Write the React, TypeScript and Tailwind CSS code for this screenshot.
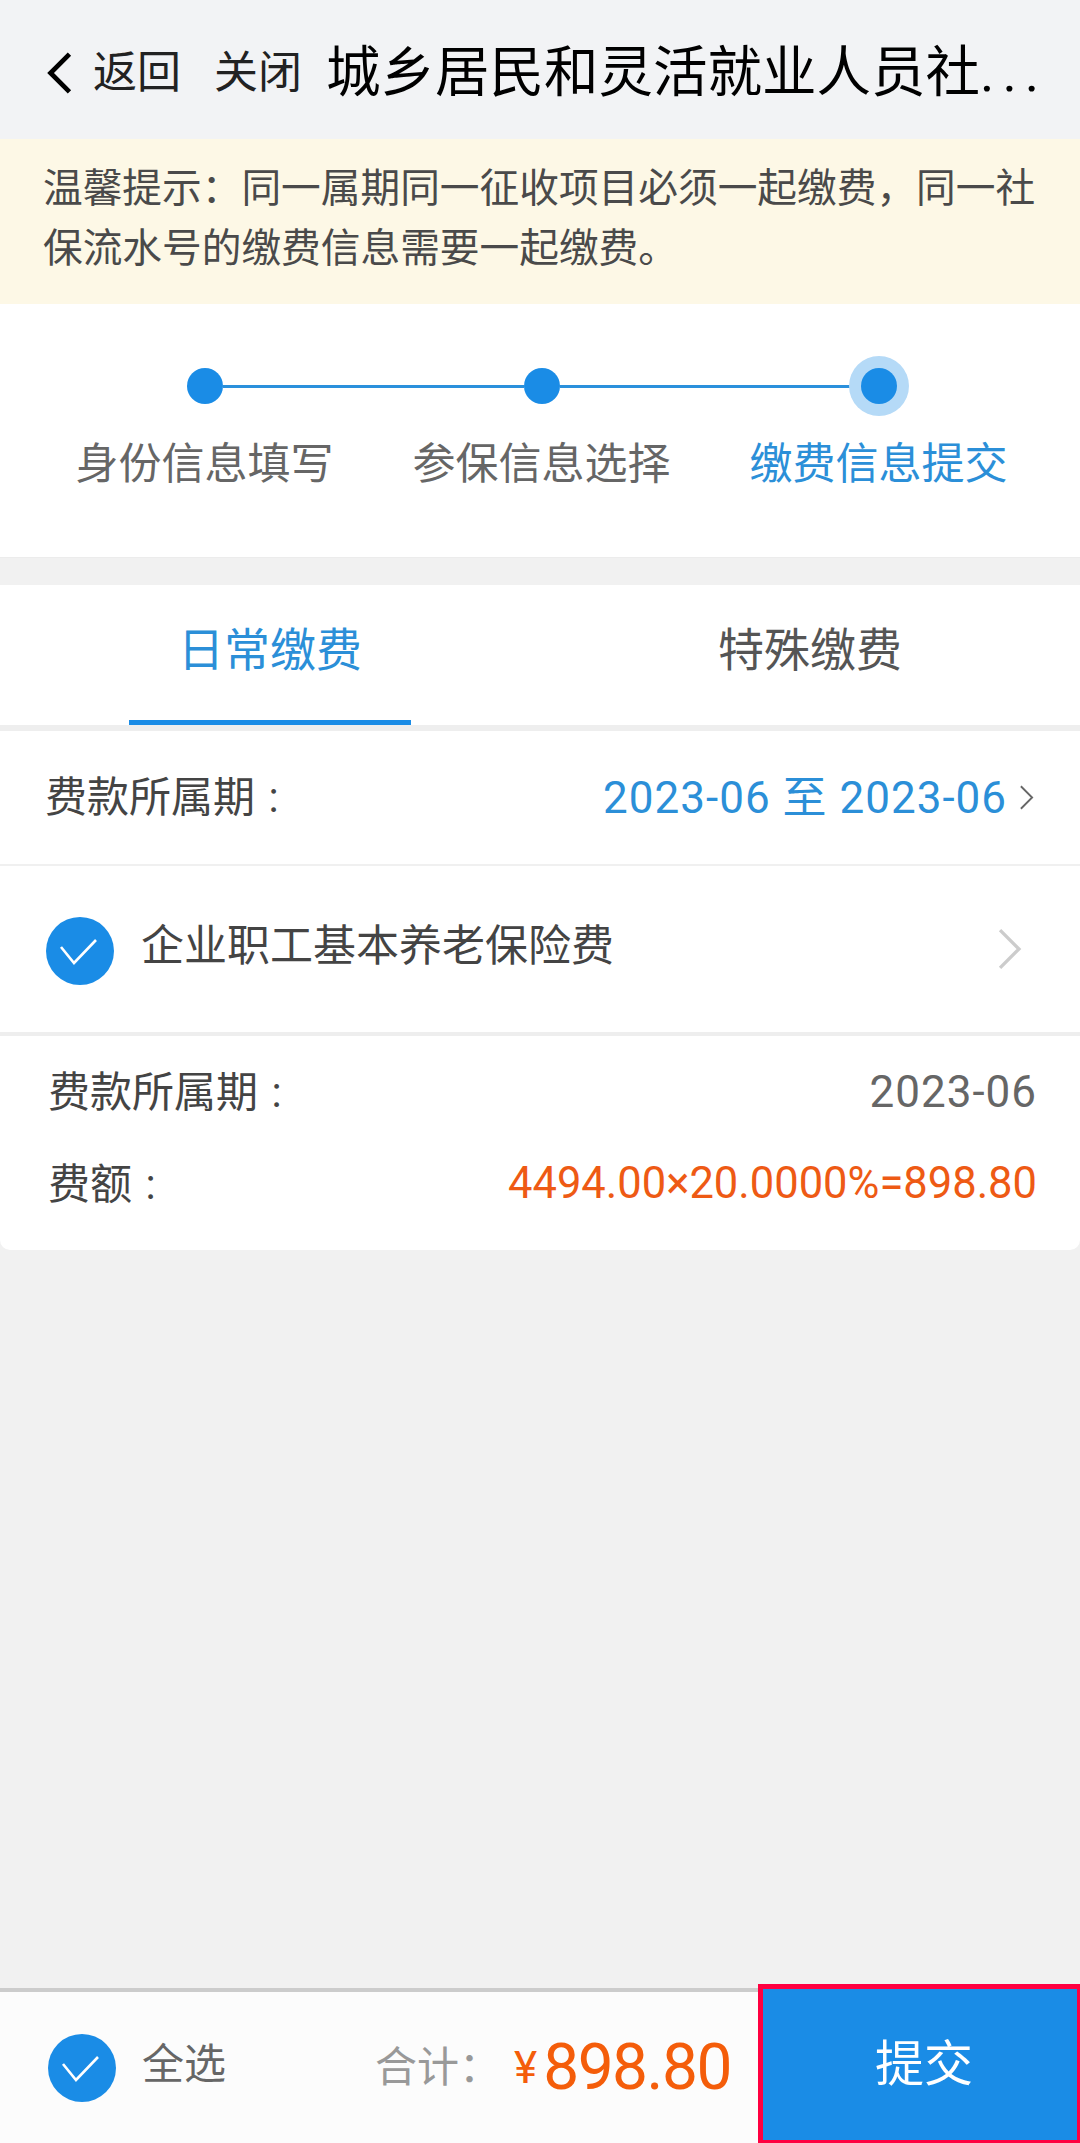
const steps = [
  { label: '身份信息填写', active: false },
  { label: '参保信息选择', active: false },
  { label: '缴费信息提交', active: true },
]

function CheckCircle({ className }: { className: string }) {
  return (
    <svg viewBox="0 0 68 68" className={className}>
      <circle cx="34" cy="34" r="34" fill="#1a8ce6" />
      <path d="M15 30 L28 46 L50 23" fill="none" stroke="#fff" strokeWidth="2.6" />
    </svg>
  )
}

function Chevron({ className, color, width, left }: { className: string; color: string; width: number; left?: boolean }) {
  return (
    <svg viewBox="0 0 24 40" className={className}>
      <path d={left ? 'M21 2 L3 20 L21 38' : 'M3 2 L21 20 L3 38'} fill="none" stroke={color} strokeWidth={width} />
    </svg>
  )
}

function Dot({ active }: { active: boolean }) {
  return (
    <div className={active ? 'w-[36px] h-[36px] rounded-full bg-[#1a8ce6] ring-[12px] ring-[#b5daf7] shrink-0' : 'w-[36px] h-[36px] rounded-full bg-[#1a8ce6] shrink-0'} />
  )
}

export default function App() {
  return (
    <div className="w-[1080px] h-[2143px] flex flex-col bg-[#f1f1f1] overflow-hidden font-['Roboto','Noto_Sans_CJK_SC',sans-serif]">
      {/* Header */}
      <div className="h-[139px] bg-[#f2f3f5] flex items-center shrink-0 pl-[46px] pt-[6px] text-black whitespace-nowrap">
        <Chevron className="w-[28px] h-[42px]" color="#000" width={4.5} left />
        <span className="ml-[19px] text-[44px] leading-none text-[#222]">返回</span>
        <span className="ml-[33px] text-[44px] leading-none text-[#222]">关闭</span>
        <span className="ml-[24px] text-[54.5px] leading-none">城乡居民和灵活就业人员社<span className="tracking-[8px]">...</span></span>
      </div>

      {/* Notice */}
      <div className="h-[165px] bg-[#fdf8e6] shrink-0 pl-[43px] pt-[20px] text-[39.7px] leading-[60px] text-[#4a4a4a] whitespace-nowrap">
        <div>{'温馨提示\uFF1A同一属期同一征收项目必须一起缴费\uFF0C同一社'}</div>
        <div>保流水号的缴费信息需要一起缴费。</div>
      </div>

      {/* Steps */}
      <div className="h-[254px] bg-white shrink-0 pt-[64px] border-b border-[#ececec]">
        <div className="flex items-center w-[710px] ml-[187px]">
          <Dot active={false} />
          <div className="flex-1 h-[3px] bg-[#2a90dc]" />
          <Dot active={false} />
          <div className="flex-1 h-[3px] bg-[#2a90dc]" />
          <Dot active={true} />
        </div>
        <div className="flex ml-[36px] mt-[30px]">
          {steps.map((s) => (
            <div key={s.label} className={s.active ? 'w-[337px] text-center text-[43px] leading-[60px] text-[#2b8fd8]' : 'w-[337px] text-center text-[43px] leading-[60px] text-[#666]'}>
              {s.label}
            </div>
          ))}
        </div>
      </div>

      {/* Tabs */}
      <div className="mt-[27px] h-[146px] bg-white shrink-0 grid grid-cols-2 border-b-[6px] border-[#eeeeee]">
        <div className="flex flex-col items-center">
          <div className="h-[140px] w-[282px] border-b-[5px] border-[#1a8ce6] text-center text-[46px] leading-[130px] text-[#2b8fd8]">日常缴费</div>
        </div>
        <div className="text-center text-[46px] leading-[130px] text-[#555]">特殊缴费</div>
      </div>

      {/* Period */}
      <div className="h-[135px] bg-white shrink-0 flex items-center justify-between pl-[45px] pr-[46px] border-b-2 border-[#f0f0f0]">
        <span className="text-[42px] text-[#444] [word-spacing:3px]">费款所属期 :</span>
        <span className="flex items-center">
          <span className="text-[44px] tracking-[1px] text-[#2b8fd8]">2023-06 至 2023-06</span>
          <Chevron className="ml-[12px] w-[15px] h-[25px]" color="#666" width={3} />
        </span>
      </div>

      {/* Item */}
      <div className="h-[166px] bg-white shrink-0 flex items-center pl-[46px] pr-[57px]">
        <CheckCircle className="w-[68px] h-[68px] mt-[3px]" />
        <span className="ml-[27px] text-[43px] text-[#444] -mt-[5px]">企业职工基本养老保险费</span>
        <Chevron className="ml-auto w-[27px] h-[42px]" color="#cccccc" width={3.2} />
      </div>

      {/* Detail */}
      <div className="h-[218px] bg-white shrink-0 rounded-b-[10px] border-t-4 border-[#eeeeee] pl-[48px] pr-[43px] pt-[26px] flex flex-col gap-[32px]">
        <div className="flex items-center justify-between h-[60px]">
          <span className="text-[42px] text-[#444] [word-spacing:3px]">费款所属期 :</span>
          <span className="text-[44px] tracking-[1px] text-[#666]">2023-06</span>
        </div>
        <div className="flex items-center justify-between h-[60px]">
          <span className="text-[42px] text-[#444] [word-spacing:3px]">费额 :</span>
          <span className="text-[43.5px] text-[#ee5a14]">4494.00×20.0000%=898.80</span>
        </div>
      </div>

      <div className="flex-1" />

      {/* Bottom bar */}
      <div className="h-[159px] shrink-0 flex">
        <div className="flex-1 mt-[4px] border-t-4 border-[#cccccc] bg-[#fcfcfc] flex items-center pl-[48px]">
          <CheckCircle className="w-[68px] h-[68px]" />
          <span className="ml-[26px] text-[42px] text-[#666] -mt-[6px]">全选</span>
          <span className="ml-[149px] text-[42px] text-[#999]">{'合计\uFF1A'}</span>
          <span className="ml-[13px] text-[44px] text-[#f45d0a]">¥</span>
          <span className="ml-[6px] text-[64px] leading-none tracking-[-1.5px] text-[#f45d0a]">898.80</span>
        </div>
        <div className="w-[322px] border-t-[5px] border-l-[5px] border-r-[3px] border-b-[3px] border-[#ff0040] bg-[#1a8ce6] flex items-center justify-center pl-[8px] text-[49px] text-white">
          提交
        </div>
      </div>
    </div>
  )
}
